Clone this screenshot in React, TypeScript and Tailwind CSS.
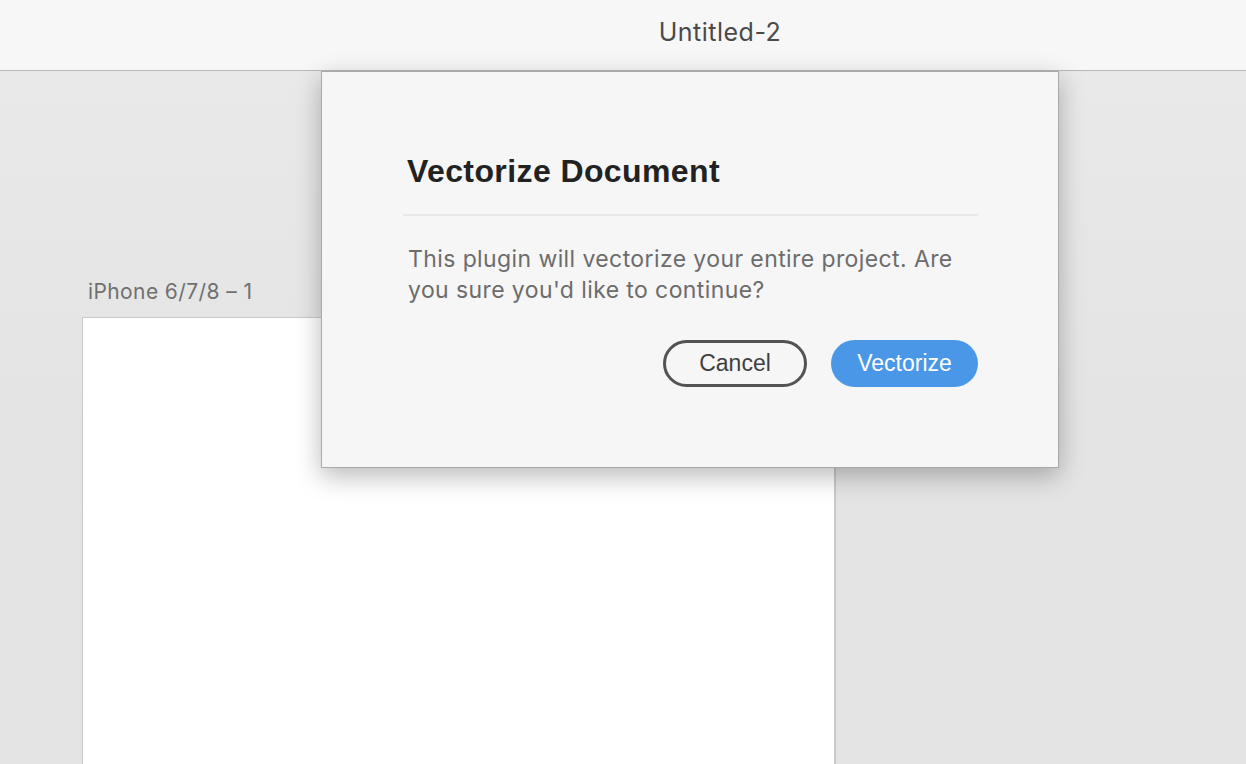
export default function App() {
  return (
    <div className="relative flex h-[764px] w-full flex-col overflow-hidden bg-[#e4e4e4] font-['Inter',sans-serif]">
      {/* title bar */}
      <div className="flex h-[71px] shrink-0 items-center justify-center border-b border-[#b8b8b8] bg-[#f7f7f7] pb-[4px] pl-[194px]">
        <span className="text-[25px] tracking-[0.5px] text-[#4a4a4a]">Untitled-2</span>
      </div>

      {/* canvas */}
      <div className="flex flex-1 flex-col bg-gradient-to-b from-[#e9e9e9] via-[#e4e4e4] to-[#e4e4e4] pl-[88px] pt-[208px]">
        <div className="text-[21px] leading-[26px] tracking-[0.4px] text-[#707070]">iPhone 6/7/8 – 1</div>
        <div className="-ml-[6px] mt-[12px] w-[754px] flex-1 border-l border-t border-r-2 border-[#c9c9c9] bg-white" />
      </div>

      {/* dialog */}
      <div className="absolute left-[321px] top-[71px] h-[397px] w-[738px] border border-[#a9a9a9] bg-[#f6f6f6] shadow-[0_8px_24px_rgba(0,0,0,0.28)]">
        <div className="ml-[81px] mr-[80px] mt-[80px]">
          <h1 className="pb-[24px] pl-[4px] font-['Liberation_Sans',sans-serif] text-[32px] font-bold leading-[38px] tracking-[0.4px] text-[#222]">
            Vectorize Document
          </h1>
          <div className="h-[2px] bg-[#e8e8e8]" />
          <p className="mt-[28px] pl-[5px] pr-[10px] text-[23px] leading-[31px] tracking-[0.4px] text-[#6c6c6c]">
            This plugin will vectorize your entire project. Are you sure you'd like to continue?
          </p>
          <div className="mt-[34px] flex justify-end gap-[24px] font-['Liberation_Sans',sans-serif]">
            <button className="h-[47px] w-[144px] rounded-full border-[3px] border-[#535353] text-[23px] text-[#3f3f3f]">
              Cancel
            </button>
            <button className="h-[47px] w-[147px] rounded-full bg-[#4a97e8] text-[23px] text-white">
              Vectorize
            </button>
          </div>
        </div>
      </div>
    </div>
  );
}
